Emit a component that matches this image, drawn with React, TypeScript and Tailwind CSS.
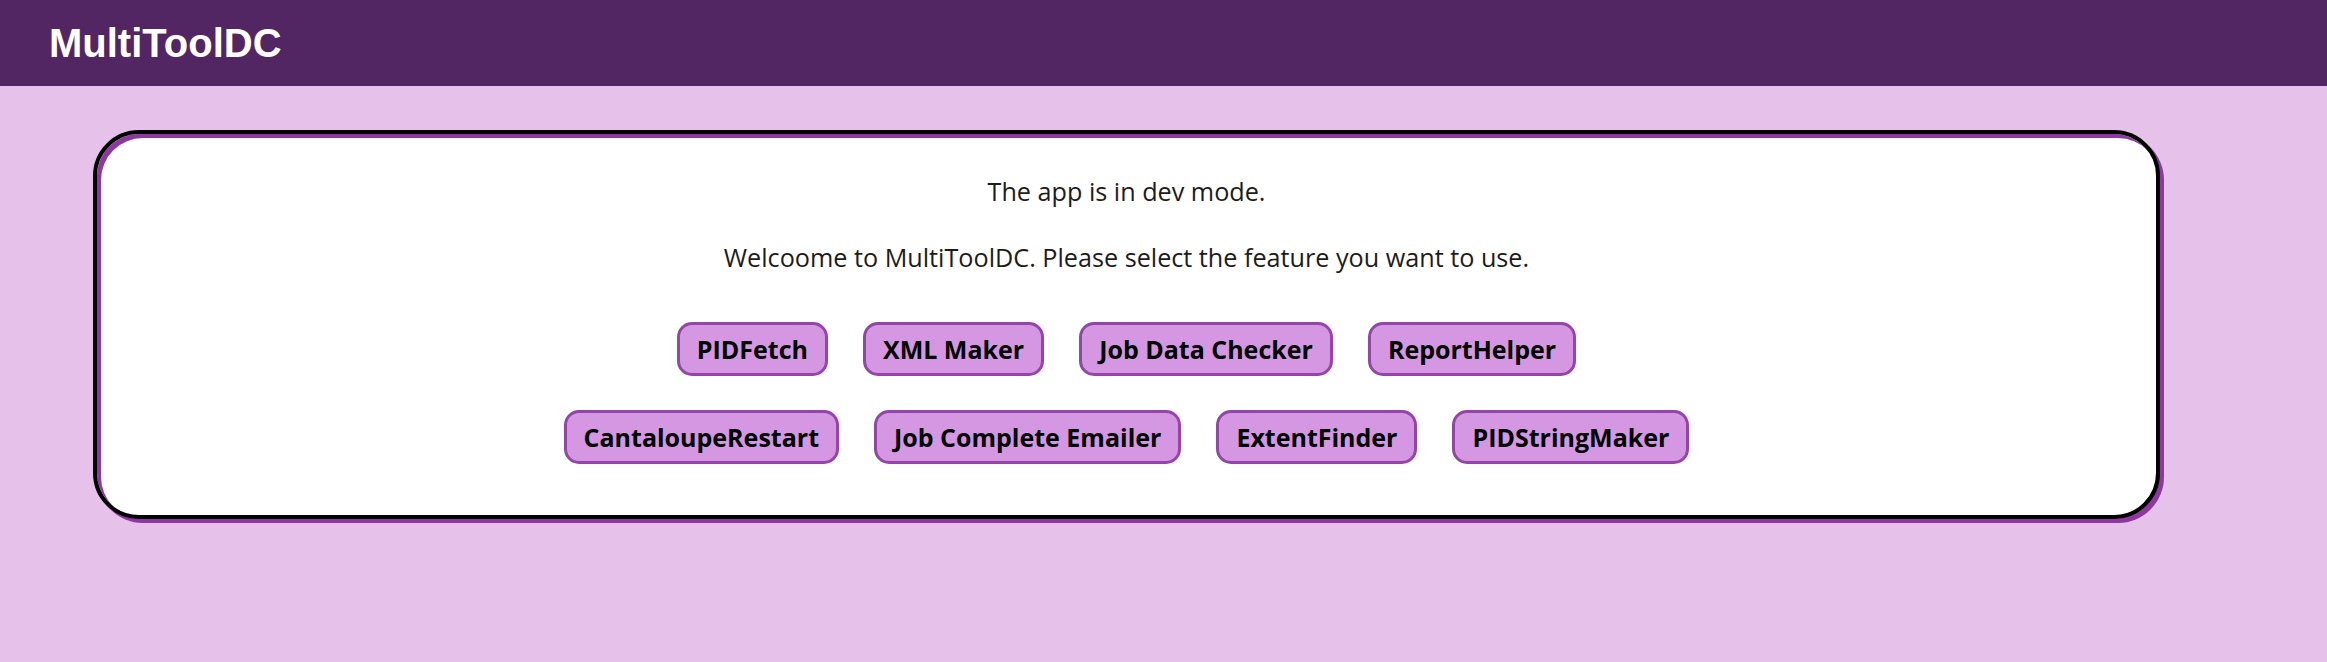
const rowOne = ['PIDFetch', 'XML Maker', 'Job Data Checker', 'ReportHelper']
const rowTwo = ['CantaloupeRestart', 'Job Complete Emailer', 'ExtentFinder', 'PIDStringMaker']

function FeatureButton({ label }: { label: string }) {
  return (
    <button className="h-[54px] px-[17px] flex items-center rounded-[15px] border-[3px] border-[#9346a8] bg-[#d597e1] text-[25px] font-bold text-black leading-none">
      {label}
    </button>
  )
}

export default function App() {
  return (
    <div className="min-h-[662px] bg-[#e6c2ea] font-['Open_Sans',sans-serif]">
      <header className="h-[86px] bg-[#522563] flex items-center pl-[49px]">
        <h1 className="text-[40px] font-bold text-white font-['Liberation_Sans',Arial,sans-serif] leading-none">
          MultiToolDC
        </h1>
      </header>

      <main className="pt-[44px]">
        <div className="ml-[93px] w-[2067px] bg-white border-4 border-black rounded-[46px] shadow-[4px_4px_0_#8e37a0,inset_4px_4px_0_#8e37a0] pt-[40px] pb-[51px]">
          <div className="text-center text-[25.2px] leading-[34px] text-[#1c1c1c]">
            <p>The app is in dev mode.</p>
            <p className="mt-[32px]">
              Welcoome to MultiToolDC. Please select the feature you want to use.
            </p>
          </div>

          <div className="mt-[48px] flex flex-col gap-[34px]">
            <div className="flex justify-center gap-[35px]">
              {rowOne.map((label) => (
                <FeatureButton key={label} label={label} />
              ))}
            </div>
            <div className="flex justify-center gap-[35px]">
              {rowTwo.map((label) => (
                <FeatureButton key={label} label={label} />
              ))}
            </div>
          </div>
        </div>
      </main>
    </div>
  )
}
